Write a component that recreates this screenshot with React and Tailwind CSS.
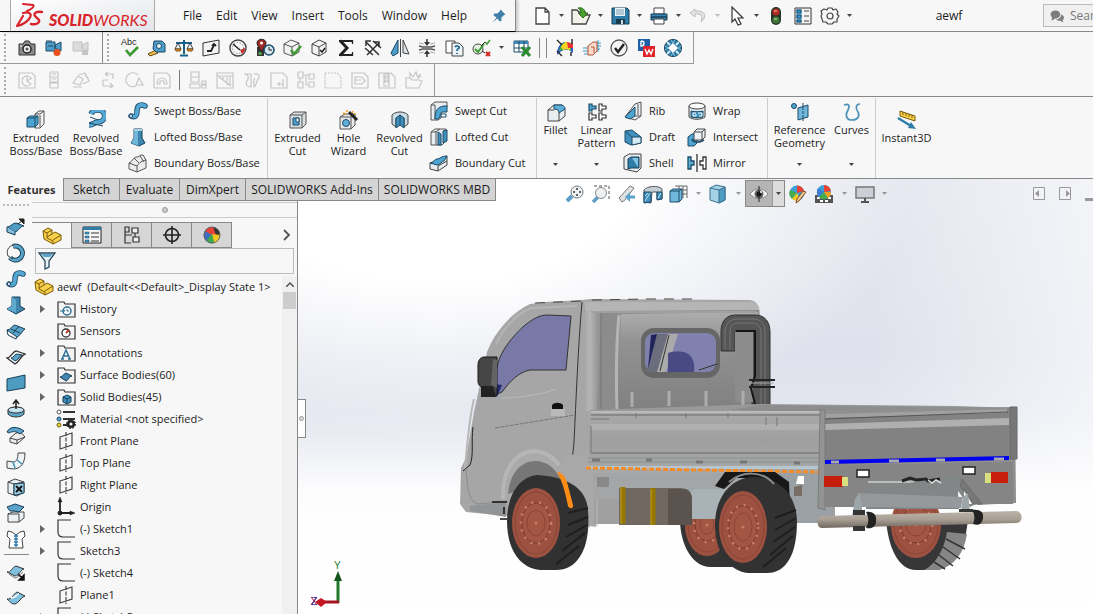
import React from 'react';

// Glyphs share a 20x20 grid
const glyphs = {
  camera: (
    <g>
      <path d="M2 6h4l2-3h4l2 3h4v11H2z" fill="#8b8b8b" stroke="#333" />
      <circle cx="10" cy="11" r="4" fill="#eee" stroke="#222" strokeWidth="1.500" />
      <circle cx="10" cy="11" r="1.500" fill="#555" />
      <path d="M3 8h2" stroke="#fff" />
    </g>
  ),
  record: (
    <g>
      <path d="M2 4h9v9H2zM11 7l6-3v9l-6-3z" fill="#4d9cc9" stroke="#1d4a66" />
      <path d="M2 3h6M4 8h5" stroke="#1d4a66" />
      <circle cx="13" cy="14.500" r="3.500" fill="#e8501e" />
    </g>
  ),
  recordOff: (
    <g>
      <path d="M2 4h9v9H2zM11 7l6-3v9l-6-3z" fill="#dcdcdc" stroke="#c2c2c2" />
      <path d="M11 12h6v5h-6z" fill="#c4c4c4" />
    </g>
  ),
  measure: (
    <g>
      <path d="M1 16l8-4 2 3-8 3z" fill="#f1c24b" stroke="#5a4410" />
      <path d="M7 3h8l3 3v8H9l-3-3z" fill="#4d9cc9" stroke="#1d4a66" />
      <circle cx="12" cy="8" r="2.500" fill="#e8f3f9" stroke="#1d4a66" />
    </g>
  ),
  scales: (
    <g>
      <path d="M10 2v14M6 17.500h8M2 5h16" stroke="#1d5f8a" strokeWidth="2" />
      <path d="M1 11l3-6 3 6zM13 11l3-6 3 6z" fill="none" stroke="#345" />
      <path d="M1 11h6l-1 2H2zM13 11h6l-1 2h-4z" fill="#f5a83a" stroke="#7a4d0c" />
    </g>
  ),
  section: (
    <g>
      <path d="M2 5l16-3v13L2 18z" fill="#f4f4f4" stroke="#333" />
      <path d="M6 13h4l3-6M11 8l2-2 2 2" fill="none" stroke="#222" strokeWidth="1.800" />
    </g>
  ),
  gauge: (
    <g>
      <circle cx="10" cy="10" r="8" fill="#f7f7f7" stroke="#444" strokeWidth="1.400" />
      <circle cx="10" cy="10" r="5.500" fill="none" stroke="#555" strokeDasharray="1 2" />
      <path d="M17 10a7 7 0 0 1-3 6l-2-4z" fill="#c2312a" />
      <path d="M5 6l7 6" stroke="#222" strokeWidth="1.500" />
    </g>
  ),
  pinClock: (
    <g>
      <path d="M2 9h7v9H2z" fill="#333" />
      <path d="M2 5c0-5 9-5 9 0 0 3-3 5-4.500 9C5 10 2 8 2 5z" fill="#9c2a22" stroke="#222" />
      <circle cx="6.500" cy="5" r="1.500" fill="#fff" />
      <circle cx="5" cy="15.500" r="1.800" fill="#4ba24a" />
      <circle cx="14" cy="12" r="5" fill="#d5e8f2" stroke="#1d4a66" strokeWidth="1.500" />
      <path d="M14 9v3h3" fill="none" stroke="#222" />
    </g>
  ),
  boxCheck: (
    <g>
      <path d="M2 6l7-4 8 3v9l-7 4-8-3z" fill="#f3f3f3" stroke="#555" />
      <path d="M2 6l8 3 7-4M10 9v9" fill="none" stroke="#555" />
      <path d="M9 12l3 4 7-8" fill="none" stroke="#3f9a35" strokeWidth="2.500" />
    </g>
  ),
  boxTick: (
    <g>
      <path d="M3 6l7-4 7 3v9l-7 4-7-3z" fill="#f3f3f3" stroke="#444" />
      <path d="M3 6l7 3 7-4M10 9v9" fill="none" stroke="#444" />
      <path d="M11 12l2 2 3-4" fill="none" stroke="#222" strokeWidth="1.500" />
    </g>
  ),
  sigma: (
    <g fill="none" stroke="#222">
      <path d="M4 2.500l7 7.500-7 7.500" strokeWidth="3" />
      <path d="M3 3h13M3 17h13" strokeWidth="2" />
      <path d="M16.500 2v4M16.500 18v-4" strokeWidth="1.300" />
    </g>
  ),
  deviate: (
    <g fill="none" stroke="#333" strokeWidth="1.500">
      <path d="M3 4l13 13M4 17L16 5M16 9V4h-5" />
      <path d="M10 3l8 7M2 10l8 7M8 3H3v5" />
    </g>
  ),
  draftCheck: (
    <g>
      <path d="M8 2L1 15l2 3 5-3z" fill="#4d9cc9" stroke="#1d4a66" />
      <path d="M13 2v13l6 1z" fill="#dde4e8" stroke="#444" />
      <path d="M10.500 1v18" stroke="#444" />
    </g>
  ),
  compress: (
    <g>
      <path d="M2 8l4 1h8l4-1M2 12l4-1h8l4 1" fill="none" stroke="#555" strokeWidth="1.500" />
      <path d="M2 5l5 1M18 5l-5 1M2 15l5-1M18 15l-5-1" stroke="#aaa" />
      <path d="M10 1v5M10 19v-5" stroke="#333" strokeWidth="1.500" />
      <path d="M7 4h6l-3 4zM7 16h6l-3-4z" fill="#333" />
    </g>
  ),
  docHelp: (
    <g>
      <path d="M2 3h9v12H2z" fill="#fff" stroke="#444" />
      <path d="M8 5h7l4 4v9H8z" fill="#eef3f7" stroke="#444" />
      <path d="M11 9c1-2 5-1 4 1-1 1-2 1-2 3M13 15v1" fill="none" stroke="#1e6a9a" strokeWidth="1.800" />
    </g>
  ),
  compare: (
    <g fill="none">
      <circle cx="7" cy="11" r="5" stroke="#444" fill="#e8f5e4" />
      <path d="M4 11l3 3 6-8" stroke="#3f9a35" strokeWidth="2" />
      <path d="M14 4l2 2 3-4" stroke="#3f9a35" strokeWidth="1.500" />
      <path d="M10 8l4-4M11 13l3 2" stroke="#222" />
      <path d="M15 14l4 4M19 14l-4 4" stroke="#d3261d" strokeWidth="2" />
    </g>
  ),
  tableX: (
    <g>
      <path d="M2 3h14v11H2z" fill="#fff" stroke="#1d4a66" />
      <path d="M2 3h14v3H2z" fill="#3b86b5" />
      <path d="M2 10h14M7 3v11M12 3v11" stroke="#1d4a66" />
      <path d="M10 9l8 9M18 9l-8 9" stroke="#2b8a2e" strokeWidth="3" />
    </g>
  ),
  simulate: (
    <g>
      <path d="M2 17C2 9 6 4 10 4l8 2v9c-3-3-5-4-8-3-3 0-5 2-8 5z" fill="#2d57c4" />
      <path d="M4 13C5 8 7 5 10 4l6 1v8c-3-2-5-2-7-1-2 0-4 1-5 1z" fill="#3fae49" />
      <path d="M6 9c1-3 3-4 5-5l4 1v7c-3-1-5-1-7 0z" fill="#f5d327" />
      <path d="M12 4l6 2v4l-5 0z" fill="#e33" />
      <path d="M2 2l5 5M17 1v5M2 13l5 5M16 14v4" stroke="#222" strokeWidth="1.400" />
    </g>
  ),
  flow: (
    <g fill="none">
      <path d="M1 10h6M1 13h6M2 16h5M13 5h6M14 8h5M14 11h4M16 2v12" stroke="#3d9ac8" />
      <path d="M6 8l5-4h4v9l-4 4H6z" fill="#fbd9cb" stroke="#b0543a" />
      <path d="M9 9h3v6" stroke="#b0543a" />
    </g>
  ),
  circleCheck: (
    <g fill="none">
      <circle cx="10" cy="10" r="8" fill="#f4f4f4" stroke="#555" strokeWidth="1.300" />
      <path d="M6 10l3 4 6-8" stroke="#222" strokeWidth="2.500" />
    </g>
  ),
  dw: (
    <g>
      <path d="M2 1h12v12H2z" fill="#1f5fa8" />
      <path d="M7 8h12v11H7z" fill="#e0242b" />
      <path d="M5 3v5c4 0 4-5 0-5" fill="none" stroke="#fff" strokeWidth="1.400" />
      <path d="M9 11l2 5 2-4 2 4 2-5" fill="none" stroke="#fff" strokeWidth="1.400" />
    </g>
  ),
  ring: (
    <g>
      <circle cx="10" cy="10" r="8.500" fill="#2c7ca8" stroke="#123c55" />
      <path d="M10 5l5 5-5 5-5-5z" fill="#fff" />
      <path d="M4 4l3 3M16 4l-3 3M4 16l3-3M16 16l-3-3" stroke="#d3e9f4" strokeWidth="2" />
      <path d="M8 2l2 3 2-3M8 18l2-3 2 3M2 8l3 2-3 2M18 8l-3 2 3 2" fill="none" stroke="#8cc0dc" />
    </g>
  ),
  spell: <path d="M6 12l4 5 8-8" fill="none" stroke="#3f9a35" strokeWidth="2.800" />,

  // Disabled second bar
  offA: <path d="M2 3h13l3 3v12H2zM14 8a5 5 0 1 0 0 6l-4-3V6M10 11l5-3" />,
  offB: <path d="M6 2h8v5H6zM6 7h8v5H6zM6 13h8v5H6zM8 9h4M8 4h4" />,
  offC: <path d="M2 13l5-7 5 3-3 6zM8 5l6-2 4 8-6 3M14 5l3 3M2 17h9" />,
  offD: <path d="M7 4h9M7 4l3-2M7 4l3 2M15 4v5M5 10v6h10M12 13l3 3-3 2M5 10h5" />,
  offE: <path d="M13 5a7 7 0 1 0-2 11M11 15l3-7 4 7z" />,
  offF: <path d="M2 3h13l3 3v12H2zM5 14c0-8 10-8 10 0M5 14h3v-3h4v3h3" />,
  offG: <path d="M3 2h8v5H3zM3 7h8v5H3zM2 14h10v4H2zM14 11h4v3h-4zM14 15h4v3h-4z" />,
  offH: <path d="M2 3h16v15H2zM2 6h16M4 7l12 9M8 7v4M12 7v8M15 7v9" />,
  offI: <path d="M2 4c5 0 5 4 3 7s0 6 4 6V4zM12 4c6-1 6 3 4 5s-1 8-5 8M13 8c-2 3-2 6 0 9" />,
  offJ: <path d="M2 3h12l4 4v11H2zM8 14h6v-5M14 14v3M10 12v4" />,
  offK: <path d="M2 2h5v6H2zM2 12h5v6H2zM13 4h5v5h-5zM13 12h5v5h-5zM7 5h6M4 8v4M10 5v10h3" />,
  offL: <path d="M2 3h12l4 4v11H2z" strokeDasharray="2 1" />,
  offM: <path d="M2 3h12l4 4v11H2zM5 7h7l3 4-3 3H5zM5 10h6" />,
  offN: <path d="M2 3h12l4 4v11H2zM7 4h5v12H7zM8 6h3v2H8zM8 10h3v2H8z" />,
  offO: <path d="M2 8h4l2 2h7l3 1-3 7H2zM6 8V3l3 4 3-5 2 6 2-4v4" />,

  newDoc: <path d="M4 2h9l4 4v12H4zM13 2v4h4" fill="#fff" stroke="#444" strokeWidth="1.300" />,
  open: (
    <g>
      <path d="M1 18V4h5l2 2h6v3h5l-4 9z" fill="#f2f2ea" stroke="#444" strokeWidth="1.300" />
      <path d="M7 2c5-1 7 2 7 5h3l-5 5-5-5h3c0-2-1-4-3-5z" fill="#4aa32d" stroke="#2c6b1c" />
    </g>
  ),
  save: (
    <g>
      <path d="M2 2h15l2 2v14H2z" fill="#2f7ca9" stroke="#173f57" />
      <path d="M5 2h10v8H5z" fill="#eef5f9" />
      <path d="M6 4h8M6 6h8M6 8h8" stroke="#7a9db0" />
      <path d="M6 13h9v5H6z" fill="#1b3b4d" />
      <path d="M11 14h2v4h-2z" fill="#cfdde4" />
    </g>
  ),
  print: (
    <g>
      <path d="M5 2h10v6H5z" fill="#fff" stroke="#444" />
      <path d="M2 8h16v6H2z" fill="#3b86b5" stroke="#173f57" />
      <path d="M5 13h10v5H5z" fill="#fff" stroke="#444" />
      <path d="M2 11h16" stroke="#173f57" strokeWidth="1.500" />
    </g>
  ),
  undo: <path d="M7 3L2 7l5 4V8c6-1 8 2 6 8 6-5 5-12-6-11z" fill="#e3e3e3" stroke="#bdbdbd" />,
  cursor: <path d="M5 1v15l3-3 3 6 3-1-3-6h5z" fill="#fff" stroke="#333" strokeWidth="1.200" />,
  traffic: (
    <g>
      <rect x="5" y="1" width="10" height="18" rx="5" fill="#26332a" />
      <circle cx="10" cy="6" r="3.600" fill="#b22a20" />
      <circle cx="10" cy="14" r="3.600" fill="#3a7a35" />
      <path d="M8 5h3M8 13h3" stroke="#e9c9c0" />
    </g>
  ),
  list: (
    <g>
      <path d="M2 2h16v16H2z" fill="#f5f5f5" stroke="#333" />
      <path d="M3 3h6v14H3z" fill="#8cc4e2" />
      <path d="M4 4h4v3H4zM4 9h4v3H4zM4 14h4v2H4z" fill="#3b9ad0" stroke="#174a66" />
      <path d="M11 5h5M11 10h5M11 15h5" stroke="#444" />
    </g>
  ),
  gear: (
    <g fill="none" stroke="#444" strokeWidth="1.200">
      <path d="M8 2h4l1 2 3-1 2 3-1 2 2 2-2 3 0 3-3 0-2 2h-4l-2-2-3 0-1-3-1-3 1-2-1-3 3-2 3 1z" strokeLinejoin="round" />
      <circle cx="10" cy="10" r="3" />
    </g>
  ),
  chat: (
    <g fill="#7d7d7d">
      <ellipse cx="8" cy="8" rx="6" ry="5" />
      <path d="M4 11l-1 5 5-3z" />
      <path d="M15 8c4 1 5 5 2 7l1 3-4-2c-3 0-5-1-5-2 4 0 6-2 6-6z" />
    </g>
  ),
  pin: <path d="M12 2l6 6-2 1-3 3 0 4-2 1-3-4-6 5 5-6-4-3 1-2h4l3-3z" fill="#3f7fa8" />,

  // Ribbon
  extrude: (
    <g>
      <path d="M9 4l4-3h5v13l-4 4H9z" fill="#f1f1f1" stroke="#555" />
      <path d="M14 5v12M9 4h5l4-3" fill="none" stroke="#555" />
      <path d="M1 8l3-2h8v8l-3 3H1z" fill="#4fa5d1" stroke="#1d4a66" />
      <path d="M1 8h8v9M9 8l3-2" fill="none" stroke="#1d4a66" />
    </g>
  ),
  revolve: (
    <g fill="none">
      <path d="M5 4a7 6 0 1 1 7 8c-4 0-4 3-9 3" stroke="#1d4a66" strokeWidth="5.500" />
      <path d="M5 4a7 6 0 1 1 7 8c-4 0-4 3-9 3" stroke="#55a8d3" strokeWidth="4" />
      <path d="M3 13l14 3M4 7l8 3" stroke="#1d4a66" />
    </g>
  ),
  sweep: (
    <g fill="none" strokeLinecap="round">
      <path d="M3 15c5 2 6-1 6-5s2-8 8-5" stroke="#1d4a66" strokeWidth="5.500" />
      <path d="M3 15c5 2 6-1 6-5s2-8 8-5" stroke="#55a8d3" strokeWidth="3.800" />
      <ellipse cx="3" cy="15" rx="1.500" ry="2" fill="#e5f3fa" stroke="#1d4a66" />
    </g>
  ),
  loft: (
    <g>
      <path d="M6 2h8v9l3 5-6 3-8-3 3-5z" fill="#3f85ad" stroke="#173f57" />
      <path d="M6 2h8v2H6z" fill="#a8d3e8" />
      <path d="M10 4v14l1 1-8-3 3-5V4z" fill="#6fb5d8" />
    </g>
  ),
  boundary: (
    <g>
      <path d="M1 10c3-1 4-5 7-6 3 1 4-3 7-2l3 5v8l-9 4-8-3z" fill="#ececec" stroke="#555" />
      <path d="M1 10l8 3c2-2 3-5 9-6M9 13v6M6 5l5 5M12 3l4 6" fill="none" stroke="#555" />
    </g>
  ),
  extrudeCut: (
    <g>
      <path d="M2 5l4-3h12v12l-4 4H2z" fill="#d8dde0" stroke="#555" />
      <path d="M2 5h12v13M14 5l4-3" fill="none" stroke="#555" />
      <path d="M5 8h6v7H5z" fill="#4fa5d1" stroke="#1d4a66" />
      <path d="M8 8h3v4H8z" fill="#fff" stroke="#1d4a66" />
    </g>
  ),
  hole: (
    <g>
      <path d="M1 7l5-3h10v11l-4 4H1z" fill="#e9e9e9" stroke="#555" />
      <path d="M1 7h11v12M12 7l4-3" fill="none" stroke="#555" />
      <circle cx="7" cy="13" r="3.500" fill="#5fb0d8" stroke="#1d4a66" />
      <path d="M10 2l8 8" stroke="#222" strokeWidth="3" />
      <path d="M4 3l3 1M8 0v2M14 1l-1 2M17 4l-2 0" stroke="#f0a020" strokeWidth="1.500" />
    </g>
  ),
  revolveCut: (
    <g>
      <path d="M2 5c3-4 13-4 16 0v9l-4 3V8l-4 2-4-2v9l-4-3z" fill="#c9dbe5" stroke="#444" />
      <path d="M6 8l4-3 4 3v10l-4-3-4 3z" fill="#3f90bd" stroke="#1d4a66" />
      <path d="M10 5v10" stroke="#1d4a66" />
    </g>
  ),
  sweepCut: (
    <g>
      <path d="M2 4l4-3h12v5c-5 0-6 3-6 11l-3 2H2z" fill="#e7edf0" stroke="#555" />
      <path d="M2 4h4v14" fill="none" stroke="#555" />
      <path d="M6 18C6 10 8 6 15 5h3v6h-3c-3 0-4 1-4 5l-2 2z" fill="#4fa5d1" stroke="#1d4a66" />
      <path d="M12 13h5v3h-5z" fill="#fff" stroke="#1d4a66" />
    </g>
  ),
  loftCut: (
    <g>
      <path d="M2 5l4-3h11v12l-4 4H2z" fill="#e7edf0" stroke="#555" />
      <path d="M7 4v14M2 5h5l4-3" fill="none" stroke="#555" />
      <path d="M9 5l3 2v11h-3zM14 4l4-1v11l-4 2z" fill="#3f90bd" stroke="#1d4a66" />
    </g>
  ),
  boundaryCut: (
    <g>
      <path d="M1 10l8-3 9-4v9l-9 6-8-2z" fill="#e7edf0" stroke="#444" />
      <path d="M1 10c4 0 4-4 7-4s4-3 10-3l-3 5c-2 0-4 4-7 4z" fill="#4fa5d1" stroke="#1d4a66" />
      <path d="M9 13l9-5M9 13v5" stroke="#444" />
    </g>
  ),
  fillet: (
    <g>
      <path d="M2 8l6-5h8l3 4v7l-6 5H2z" fill="#e9eef1" stroke="#444" />
      <path d="M8 3h8c2 1 3 2 3 4l-6 4c0-3-2-4-5-4z" fill="#5fb0d8" stroke="#1d4a66" />
      <path d="M13 11v8M2 8h6" stroke="#444" />
    </g>
  ),
  pattern: (
    <g stroke="#333" strokeWidth="1.200" fill="#fff">
      <path d="M2 2h3v2h4v3H5v2H2z" fill="#4fa5d1" stroke="#1d4a66" />
      <path d="M12 2h3v2h4v3h-4v2h-3zM2 11h3v2h4v3H5v2H2zM12 11h3v2h4v3h-4v2h-3z" />
    </g>
  ),
  rib: (
    <g>
      <path d="M2 16L12 3l6-2v14l-6 4z" fill="#eceff1" stroke="#555" />
      <path d="M2 16L12 6v9l-5 3z" fill="#4fa5d1" stroke="#1d4a66" />
      <path d="M12 15l6 0M15 3v11" stroke="#555" />
    </g>
  ),
  draft: (
    <g>
      <path d="M2 4l7-1 9 7v6l-10 2-6-3z" fill="#3f90bd" stroke="#1d4a66" />
      <path d="M9 10h9v6l-9 2z" fill="#d7e9f2" stroke="#1d4a66" />
      <path d="M2 4l7 6" stroke="#1d4a66" />
    </g>
  ),
  shell: (
    <g>
      <path d="M1 4l5-3h12v14l-4 4-13-3z" fill="#e9eef1" stroke="#444" />
      <path d="M5 6l3-2h8v11H8l-3 1z" fill="#2f7ca9" stroke="#173f57" />
      <path d="M9 5h6v9z" fill="#83c4e4" />
    </g>
  ),
  wrap: (
    <g>
      <path d="M2 5v11c3 3 13 3 16 0V5" fill="#e4ebef" stroke="#444" />
      <ellipse cx="10" cy="5" rx="8" ry="3" fill="#fff" stroke="#444" />
      <path d="M4 10c4 1 8 1 12 0v6c-4 1-8 1-12 0z" fill="#3f90bd" stroke="#1d4a66" />
      <path d="M9 12H6v3h3v-2M11 12h4v3h-3" fill="none" stroke="#fff" />
    </g>
  ),
  intersect: (
    <g>
      <path d="M1 10l4-3h5v9l-3 3H1z" fill="#4fa5d1" stroke="#1d4a66" />
      <path d="M7 5l3-3h8v8l-3 3H7z" fill="#f0f3f5" stroke="#444" />
      <path d="M7 5h8v8M15 5l3-3" fill="none" stroke="#444" />
      <path d="M5 12c1 4 7 4 12 1" fill="none" stroke="#1d4a66" strokeWidth="1.500" />
    </g>
  ),
  mirror: (
    <g strokeWidth="1.300">
      <path d="M1 4h3v4h3v4H4v4H1z" fill="#5fb0d8" stroke="#1d4a66" />
      <path d="M10 1v18" stroke="#333" />
      <path d="M19 4h-3v4h-3v4h3v4h3z" fill="#fff" stroke="#333" />
    </g>
  ),
  refGeom: (
    <g>
      <circle cx="4" cy="4" r="2.500" fill="#4fa5d1" stroke="#1d4a66" />
      <path d="M8 6l10-3v12L8 18z" fill="#6fb8dc" stroke="#1d4a66" />
      <path d="M13 1v18" stroke="#1d4a66" strokeDasharray="3 1" />
    </g>
  ),
  curves: <path d="M2 3c5-2 6 1 4 5-3 5-2 10 4 10s8-4 6-8c-3-4-2-8 2-8" fill="none" stroke="#4d93b8" strokeWidth="1.700" />,
  instant: (
    <g>
      <path d="M3 1l15 5v5L3 6z" fill="#f7d248" stroke="#7a5c10" />
      <path d="M6 2v3M9 3v3M12 4v3M15 5v3" stroke="#7a5c10" />
      <path d="M1 8l13 8" stroke="#2f7ca9" strokeWidth="2.500" />
      <path d="M14 12l5 7-8-1z" fill="#2f7ca9" />
    </g>
  ),

  // Heads-up view bar
  zoomFit: (
    <g>
      <path d="M2 17l5-5" stroke="#5d9fc4" strokeWidth="4" />
      <circle cx="12" cy="8" r="6" fill="#eef1f4" stroke="#777" />
      <path d="M12 4v2M12 10v2M8 8h2M14 8h2" stroke="#333" strokeWidth="1.500" />
    </g>
  ),
  zoomArea: (
    <g>
      <path d="M3 2h15v13" fill="none" stroke="#555" strokeDasharray="3 2" />
      <path d="M2 18l5-5" stroke="#5d9fc4" strokeWidth="3.500" />
      <circle cx="10" cy="9" r="5.500" fill="#eef1f4" stroke="#888" />
    </g>
  ),
  prevView: (
    <g>
      <path d="M2 14L13 2l4 2-9 12-3 2z" fill="#dfe3e6" stroke="#777" />
      <path d="M18 13h-6" stroke="#5ba3c9" strokeWidth="3" />
      <path d="M13 8v10l-5-5z" fill="#5ba3c9" />
    </g>
  ),
  sectionView: (
    <g>
      <path d="M1 6c3-4 14-5 18-1v10h-5V8H9l-1 11-7-1z" fill="#c5d0d6" stroke="#555" />
      <path d="M1 8h7v10l-7 1zM14 8h5v7l-5 1z" fill="#3f90bd" stroke="#1d4a66" />
      <path d="M2 17l5-8M2 12l3-3M15 14l3-5" stroke="#bfe0ef" />
    </g>
  ),
  orient: (
    <g>
      <path d="M6 2h12v12M10 2v12M14 2v12M6 6h12M10 10h8" fill="none" stroke="#666" />
      <path d="M1 7l3-2h9v10l-3 3H1z" fill="#6fb8dc" stroke="#1d4a66" />
      <path d="M1 7h9v11M10 7l3-2" fill="none" stroke="#1d4a66" />
    </g>
  ),
  display: (
    <g>
      <path d="M2 4l6-3 9 2v13l-6 3-9-3z" fill="#a5d2e6" stroke="#3a718f" />
      <path d="M11 6l6-3v13l-6 3z" fill="#4f9cc3" stroke="#3a718f" />
      <path d="M2 4l9 2" stroke="#3a718f" />
    </g>
  ),
  eye: (
    <g>
      <path d="M1 10c5-7 13-7 18 0-5 6-13 6-18 0z" fill="#f5f5f5" stroke="#888" />
      <circle cx="10" cy="10" r="4.500" fill="#666" />
      <circle cx="10" cy="10" r="2.500" fill="#111" />
      <path d="M10 2v16" stroke="#222" />
      <circle cx="12" cy="8" r="1" fill="#fff" />
    </g>
  ),
  ball: (
    <g>
      <circle cx="10" cy="10" r="8" fill="#2f83c6" />
      <path d="M10 10L3 6a8 8 0 0 0 1 10z" fill="#3c6fc0" />
      <path d="M10 10L3 6a8 8 0 0 1 8-4l6 8z" fill="#e94235" />
      <path d="M11 2a8 8 0 0 1 7 8l-4 0z" fill="#333" />
      <path d="M10 9l8 1a8 8 0 0 1-6 8z" fill="#f4c81f" />
      <path d="M10 9l2 9a8 8 0 0 1-8-2z" fill="#3faa4a" />
      <circle cx="10" cy="10" r="8" fill="none" stroke="#666" />
    </g>
  ),
  editLook: (
    <g>
      <circle cx="9" cy="9" r="7.500" fill="#3c9fd8" />
      <path d="M9 9V1.500A7.500 7.500 0 0 1 16 7z" fill="#e94235" />
      <path d="M9 9L2 6a8 8 0 0 0 2 9z" fill="#44ac4d" />
      <path d="M9 9l-5 6a8 8 0 0 0 8 1z" fill="#f4c81f" />
      <path d="M18 8l-7 9-3 2 1-4 6-8z" fill="#f2c78a" stroke="#7a4d2c" />
    </g>
  ),
  scene: (
    <g>
      <path d="M1 11h18v8H1z" fill="#555" />
      <path d="M3 13h3v2H3zM14 13h3v2h-3zM6 16h3v2H6zM11 16h3v2h-3z" fill="#fff" />
      <circle cx="10" cy="8" r="7" fill="#3c9fd8" />
      <path d="M10 8V1a7 7 0 0 1 7 6z" fill="#e94235" />
      <path d="M10 8L4 4a7 7 0 0 0 1 9z" fill="#3c7fd8" />
      <path d="M10 8l-5 5a7 7 0 0 0 9 1z" fill="#44ac4d" />
      <path d="M10 8l7 0a7 7 0 0 1-3 6z" fill="#f4a01f" />
    </g>
  ),
  monitor: (
    <g>
      <path d="M1 3h18v11H1z" fill="#cbd0d6" stroke="#777" strokeWidth="1.500" />
      <path d="M10 14v4M6 18h8" stroke="#555" strokeWidth="2" />
    </g>
  ),
  paneLeft: (
    <g>
      <path d="M4.500 3.500h11v12h-11z" fill="#f2f3f6" stroke="#999" />
      <path d="M10 6v7l-4-3.500z" fill="#999" />
    </g>
  ),
  paneRight: (
    <g>
      <path d="M4.500 3.500h11v12h-11z" fill="#f2f3f6" stroke="#999" />
      <path d="M11 6v7l4-3.500z" fill="#999" />
    </g>
  ),

  // Surface strip
  surfExtrude: (
    <g>
      <path d="M1 10c4 0 5-4 9-4l8 3c-4 0-5 5-9 6z" fill="#4f9cc3" stroke="#173f57" />
      <path d="M1 10v5l8 3v-3" fill="#83bfdc" stroke="#173f57" />
      <path d="M12 7l5-4M13 2h5v5z" stroke="#222" fill="#222" />
    </g>
  ),
  surfRevolve: (
    <g fill="none">
      <path d="M7 3.500a7 7 0 1 1-3 11" stroke="#173f57" strokeWidth="5" />
      <path d="M7 3.500a7 7 0 1 1-3 11" stroke="#5ba3c9" strokeWidth="3" />
      <path d="M8 2C2 3 0 8 2 13l5 3" stroke="#444" />
    </g>
  ),
  surfLoft: (
    <g>
      <path d="M6 2h8v9l5 3-9 5-9-5 5-3z" fill="#3f85ad" stroke="#173f57" />
      <path d="M6 2l4 3v13L1 14l5-3z" fill="#5fa9cf" />
    </g>
  ),
  surfBoundary: (
    <g>
      <path d="M1 9c4 0 4-4 8-5l10 4c-3 2-4 6-8 8z" fill="#5ba3c9" stroke="#173f57" />
      <path d="M1 9l1 5 8 4 1-2M5 8l9 4M13 6c-3 1-4 5-6 6" fill="none" stroke="#173f57" />
    </g>
  ),
  surfFill: (
    <g>
      <path d="M1 11c4 0 5-6 9-7l9 3c-4 1-5 8-10 10z" fill="#fff" stroke="#333" strokeWidth="1.300" />
      <path d="M5 11c3 0 3-4 6-4l5 1c-3 1-3 5-7 6z" fill="#5ba3c9" stroke="#173f57" />
    </g>
  ),
  planar: <path d="M1 6l18-4v13L1 18z" fill="#4f9cc3" stroke="#173f57" />,
  offset: (
    <g>
      <path d="M2 11c3-4 13-4 16 0v4c-3 4-13 4-16 0z" fill="#5ba3c9" stroke="#333" />
      <ellipse cx="10" cy="11" rx="8" ry="3" fill="#c4e2f0" stroke="#333" />
      <path d="M10 10V2M7 5l3-4 3 4" fill="none" stroke="#222" strokeWidth="1.500" />
    </g>
  ),
  ruled: (
    <g>
      <path d="M4 13l6-5c7-1 6 1 9 4l-8 7-7-2z" fill="#eee" stroke="#444" />
      <path d="M11 15l8-3M4 13l7 2v4" fill="none" stroke="#444" />
      <path d="M1 7c3-6 10-6 17-1l-4 3c-4-3-7-3-11-1z" fill="#5ba3c9" stroke="#173f57" />
    </g>
  ),
  flatten: (
    <g>
      <path d="M1 10l6 1c4 0 5-4 5-9l7 0c0 10-4 16-12 16l-6-1z" fill="#eef4f7" stroke="#444" />
      <path d="M7 11l2 6M11 9l5 4" stroke="#3f90bd" strokeWidth="1.500" />
    </g>
  ),
  deleteFace: (
    <g>
      <path d="M2 5l7-3 9 3v10l-7 4-9-3z" fill="#e9eef1" stroke="#444" />
      <path d="M2 5l6 2 10-2M8 7v11" fill="none" stroke="#444" />
      <path d="M8 7l10-1v10l-8 2-2 0z" fill="#9ccbe2" stroke="#173f57" />
      <path d="M10 9l6 6M16 9l-6 6" stroke="#111" strokeWidth="1.800" />
    </g>
  ),
  replaceFace: (
    <g>
      <path d="M2 11l5-2h11v6l-5 4H2z" fill="#eef1f3" stroke="#444" />
      <path d="M2 11h11v8" fill="none" stroke="#444" />
      <path d="M1 4l8-3 9 3-5 5-5-1-4 0z" fill="#5ba3c9" stroke="#173f57" />
    </g>
  ),
  zip: (
    <g>
      <path d="M2 2l4 1 4 3 4-3 4-1 1 5-3 3 1 9H3l1-9-3-3z" fill="#fff" stroke="#444" />
      <path d="M10 5v13M8 7h4M8 10h4M8 13h4M8 16h4" stroke="#2f7ca9" strokeWidth="1.300" />
    </g>
  ),
  extend: (
    <g>
      <path d="M1 10c4 1 5-5 9-6l8 3c-4 1-5 7-9 7z" fill="#7fc0dd" stroke="#333" />
      <path d="M3 12l6 4c3 0 5-4 8-6" fill="none" stroke="#777" />
      <path d="M12 12l5 5M18 13v5h-5z" fill="#111" stroke="#111" strokeWidth="1.500" />
    </g>
  ),
  wave: (
    <g>
      <path d="M1 11c5 1 6-5 10-7l8 4c-4 1-6 7-10 8-3 0-4-1-8-5z" fill="#7fc0dd" stroke="#333" />
      <path d="M5 10c4 0 5-3 8-4" stroke="#fff" fill="none" strokeWidth="1.500" />
    </g>
  ),

  // Feature tree
  part: (
    <g stroke="#7a5a0a" strokeLinejoin="round">
      <path d="M1 5l5-3 4 2v4l3-2 6 3v5l-8 4-9-5z" fill="#f8d14a" />
      <path d="M1 5l4 2 5-3M5 7v5l6 3v3M5 11l5-3M11 14l8-5" fill="none" />
    </g>
  ),
  sheet: (
    <g>
      <path d="M1 2h18v16H1z" fill="#f5f5f5" stroke="#222" />
      <path d="M1 2h18v3H1z" fill="#2f7ca9" />
      <path d="M3 7h4v2H3zM3 11h4v2H3zM3 15h4v2H3z" fill="#3b9ad0" stroke="#174a66" strokeWidth=".5" />
      <path d="M9 8h8M9 12h8M9 16h8" stroke="#333" />
    </g>
  ),
  config: (
    <g fill="none" stroke="#333" strokeWidth="1.200">
      <path d="M3 2h4v5H3zM3 2v16h6M3 10h7" />
      <path d="M10 3h6v5h-6zM11 12h6v5h-6z" fill="#eee" />
      <path d="M13 8v4" />
    </g>
  ),
  target: (
    <g fill="none" stroke="#222" strokeWidth="1.600">
      <circle cx="10" cy="10" r="6.500" />
      <path d="M10 1v18M1 10h18" />
    </g>
  ),
  funnel: (
    <g>
      <path d="M2 2h16l-6 8v6l-4 2v-8z" fill="#e9f1f6" stroke="#2a4b5e" strokeWidth="1.300" />
      <path d="M4 3h12l-3 3H7z" fill="#5ba3c9" />
    </g>
  ),
  material: (
    <g>
      <path d="M7 3h12M7 10h12M7 16h6" stroke="#333" strokeWidth="1.800" />
      <circle cx="3" cy="3" r="2" fill="#fff" stroke="#555" />
      <circle cx="3" cy="10" r="2" fill="#4fa5d1" stroke="#1d4a66" />
      <circle cx="3" cy="16" r="2" fill="#f0d83a" stroke="#6a5c10" />
      <circle cx="15" cy="15" r="2.800" fill="none" stroke="#222" strokeWidth="2.500" />
      <circle cx="15" cy="15" r="4.500" fill="none" stroke="#222" strokeDasharray="2 1.500" />
    </g>
  ),
  plane: (
    <g fill="none" stroke="#444" strokeWidth="1.200">
      <path d="M4 6l12-4v12L4 18z" />
      <path d="M10 1v18" strokeDasharray="4 1.500" />
    </g>
  ),
  origin: (
    <g stroke="#222" fill="#222">
      <path d="M4 3v13h13" fill="none" strokeWidth="1.800" />
      <path d="M4 0l2 5H2zM19 16l-5-2v4z" strokeWidth=".5" />
      <circle cx="4" cy="16" r="2" />
    </g>
  ),
  sketch: <path d="M15 1H2v12c0 4 2 5 5 5h12" fill="none" stroke="#333" strokeWidth="1.200" />,
};

const folder = <path d="M2 18V3h6l1 2h10v13z" fill="#f3f3f3" stroke="#333" strokeWidth="1.200" />;
glyphs.folderHistory = (
  <g>
    {folder}
    <circle cx="11" cy="12" r="4" fill="#fff" stroke="#2f6f94" strokeWidth="1.500" />
    <path d="M11 10v2h2M4 12h5l-2-2" fill="none" stroke="#2f6f94" />
  </g>
);
glyphs.folderSensor = (
  <g>
    {folder}
    <circle cx="10" cy="12" r="4" fill="#fff" stroke="#333" strokeWidth="1.300" />
    <path d="M10 12l3-3" stroke="#c2312a" strokeWidth="2" />
  </g>
);
glyphs.folderNote = (
  <g>
    {folder}
    <path d="M6 16l4-9 4 9M7.500 13h5M5 16h3M12 16h3" fill="none" stroke="#2f6f94" strokeWidth="1.500" />
  </g>
);
glyphs.folderSurface = (
  <g>
    {folder}
    <path d="M4 12c3 0 3-3 6-4l6 3c-3 0-3 4-6 5z" fill="#3f85ad" stroke="#173f57" />
  </g>
);
glyphs.folderSolid = (
  <g>
    {folder}
    <path d="M7 10l4-2 4 2v5l-4 2-4-2z" fill="#3f90bd" stroke="#173f57" />
    <path d="M7 10l4 2 4-2M11 12v5" fill="none" stroke="#173f57" />
  </g>
);

const Icon = ({ name, className = 'w-5 h-5' }) => {
  const off = name.length === 4 && name.startsWith('off');
  return (
    <svg viewBox="0 0 20 20" className={`${className} shrink-0`} aria-hidden="true">
      {off ? <g fill="none" stroke="#c6c6c6" strokeWidth="1.200">{glyphs[name]}</g> : glyphs[name]}
    </svg>
  );
};

const Caret = ({ className = 'text-[#444]' }) => (
  <svg viewBox="0 0 5 3" className={`w-[5px] h-[3px] shrink-0 ${className}`} aria-hidden="true">
    <path d="M0 0h5L2.500 3z" fill="currentColor" />
  </svg>
);

const IconButton = ({ name, label }) => (
  <button type="button" aria-label={label || name} className="flex w-[27px] h-full shrink-0 items-center justify-center">
    <Icon name={name} />
  </button>
);

const CaretButton = ({ label, className = 'w-3', tone }) => (
  <button type="button" aria-label={label} className={`flex h-full shrink-0 items-center justify-center ${className}`}>
    <Caret className={tone} />
  </button>
);

const Grip = () => <div className="w-0 h-[27px] border-l-2 border-dotted border-[#aaa] shrink-0" />;

const menus = ['File', 'Edit', 'View', 'Insert', 'Tools', 'Window', 'Help'];

const Logo = () => (
  <div className="flex items-center h-full w-[145px] shrink-0 border-x border-[#aaa] bg-linear-to-br from-white to-[#e2e4e8] pl-1">
    <svg viewBox="0 0 30 28" className="w-[30px] h-7 shrink-0" aria-hidden="true">
      <g fill="none" stroke="#d8232a" strokeLinecap="round" strokeLinejoin="round">
        <path d="M8 2l10 1c2 1-1 4-6 6" strokeWidth="2" />
        <path d="M8 11c6-2 10 1 6 6-3 4-8 6-12 7L8 14" strokeWidth="2.200" />
        <path d="M27 10c-5-1-9 1-7 4l4 4c1 3-3 5-8 4" strokeWidth="2.400" />
      </g>
    </svg>
    <span className="pl-1 pt-2 font-[Lato] text-[16px] leading-5 italic text-[#d8232a]">
      <b className="font-black">SOLID</b>
      <span className="font-normal">WORKS</span>
    </span>
  </div>
);

const TitleBar = () => (
  <header className="flex h-8 shrink-0 border-b border-[#888]">
    <div className="flex h-8 shrink-0 border-b border-black border-r border-r-[#888] pl-[10px] shadow-[2px_0_3px_#0003]">
      <Logo />
      <nav className="flex items-center pl-7 pr-2">
        {menus.map((m) => (
          <button key={m} type="button" className="mr-[14px] h-full">{m}</button>
        ))}
        <button type="button" aria-label="Pin menu" className="ml-[10px] h-full">
          <Icon name="pin" className="w-4 h-4" />
        </button>
      </nav>
    </div>
    <div className="flex shrink-0 pl-3">
      {['newDoc', 'open', 'save', 'print', 'undo', 'cursor'].map((n) => (
        <div key={n} className="flex">
          <IconButton name={n} />
          <CaretButton label={`${n} options`} tone={n === 'undo' ? 'text-[#bbb]' : undefined} />
        </div>
      ))}
      <IconButton name="traffic" />
      <IconButton name="list" />
      <IconButton name="gear" />
      <CaretButton label="gear options" />
    </div>
    <div className="flex flex-1 items-center justify-center">aewf</div>
    <label className="my-1 flex w-[50px] shrink-0 items-center overflow-hidden border border-r-0 border-[#bbb] bg-[#f0f0f0] pl-[5px]">
      <Icon name="chat" className="w-4 h-4" />
      <input type="text" aria-label="Search commands" placeholder="Search" className="ml-[5px] w-16 shrink-0 bg-transparent outline-none placeholder:text-[#777]" />
    </label>
  </header>
);

const toolsA = ['measure', 'scales', 'section', 'gauge', 'pinClock', 'boxCheck', 'boxTick', 'sigma', 'deviate', 'draftCheck', 'compress', 'docHelp', 'compare'];
const offA = ['offA', 'offB', 'offC', 'offD', 'offE', 'offF'];
const offB = ['offG', 'offH', 'offI', 'offJ', 'offK', 'offL', 'offM', 'offN', 'offO'];

const Toolbars = () => (
  <div className="shrink-0 border-b border-[#888]">
    <div className="flex h-8 w-max items-center border-b border-r border-[#999] pl-1 pr-[7px]">
      <Grip />
      <div className="w-[7px]" />
      <IconButton name="camera" />
      <IconButton name="record" />
      <IconButton name="recordOff" />
      <div className="ml-2 h-full border-l border-[#888]" />
      <div className="w-1" />
      <Grip />
      <div className="w-[7px]" />
      <button type="button" aria-label="Spelling" className="relative flex h-full w-[27px] items-center justify-center">
        <Icon name="spell" />
        <span className="absolute top-1 left-[5px] font-['Liberation_Sans'] text-[9px] leading-3">Abc</span>
      </button>
      {toolsA.map((n) => <IconButton key={n} name={n} />)}
      <CaretButton label="compare options" className="w-[14px]" />
      <IconButton name="tableX" />
      <div className="ml-1 h-5 border-l border-[#888]" />
      <div className="ml-[6px] mr-1 h-5 border-l border-[#888]" />
      {['simulate', 'flow', 'circleCheck', 'dw', 'ring'].map((n) => <IconButton key={n} name={n} />)}
    </div>
    <div className="flex h-8 w-max items-center border-r border-[#999] pl-1 pr-[7px]">
      <Grip />
      <div className="w-[7px]" />
      {offA.map((n) => <IconButton key={n} name={n} />)}
      <div className="ml-1 mr-1 h-5 border-l border-[#777]" />
      {offB.map((n) => <IconButton key={n} name={n} />)}
    </div>
  </div>
);

const BigButton = ({ icon, lines, width, menu }) => (
  <button type="button" className={`flex h-[78px] flex-col items-center shrink-0 ${menu ? 'pt-1' : 'pt-3'} ${width}`}>
    <Icon name={icon} />
    <span className="pt-px text-center leading-[13px]">
      {lines.map((l) => <span key={l} className="block">{l}</span>)}
    </span>
    {menu && <span className="mt-auto pb-[10px]"><Caret /></span>}
  </button>
);

const SmallColumn = ({ items, className }) => (
  <div className={`flex flex-col shrink-0 ${className}`}>
    {items.map(([icon, label]) => (
      <button key={label} type="button" className="flex h-[26px] items-center gap-[6px] whitespace-nowrap">
        <Icon name={icon} />
        {label}
      </button>
    ))}
  </div>
);

const Group = ({ children, className = '' }) => (
  <div className={`flex shrink-0 border-r border-[#ccc] ${className}`}>{children}</div>
);

const Ribbon = () => (
  <div className="flex h-[81px] shrink-0 overflow-hidden pt-px text-[11px]">
    <Group className="w-[268px] pl-[6px]">
      <BigButton icon="extrude" lines={['Extruded', 'Boss/Base']} width="w-[60px]" />
      <BigButton icon="revolve" lines={['Revolved', 'Boss/Base']} width="w-[60px]" />
      <SmallColumn className="pl-[2px]" items={[['sweep', 'Swept Boss/Base'], ['loft', 'Lofted Boss/Base'], ['boundary', 'Boundary Boss/Base']]} />
    </Group>
    <Group className="w-[269px] pl-1">
      <BigButton icon="extrudeCut" lines={['Extruded', 'Cut']} width="w-[51px]" />
      <BigButton icon="hole" lines={['Hole', 'Wizard']} width="w-[51px]" />
      <BigButton icon="revolveCut" lines={['Revolved', 'Cut']} width="w-[51px]" />
      <SmallColumn className="pl-1" items={[['sweepCut', 'Swept Cut'], ['loftCut', 'Lofted Cut'], ['boundaryCut', 'Boundary Cut']]} />
    </Group>
    <Group className="w-[231px]">
      <BigButton icon="fillet" lines={['Fillet']} width="w-[37px]" menu />
      <BigButton icon="pattern" lines={['Linear', 'Pattern']} width="w-[45px]" menu />
      <SmallColumn className="w-[64px] pl-1" items={[['rib', 'Rib'], ['draft', 'Draft'], ['shell', 'Shell']]} />
      <SmallColumn className="pl-1" items={[['wrap', 'Wrap'], ['intersect', 'Intersect'], ['mirror', 'Mirror']]} />
    </Group>
    <Group className="w-[108px] pl-[3px]">
      <BigButton icon="refGeom" lines={['Reference', 'Geometry']} width="w-[57px]" menu />
      <BigButton icon="curves" lines={['Curves']} width="w-[47px]" menu />
    </Group>
    <BigButton icon="instant" lines={['Instant3D']} width="w-[61px]" />
  </div>
);

const tabs = [
  ['Sketch', 'w-[56px]'],
  ['Evaluate', 'w-[60px]'],
  ['DimXpert', 'w-[66px]'],
  ['SOLIDWORKS Add-Ins', 'w-[133px]'],
  ['SOLIDWORKS MBD', 'w-[118px]'],
];

const HeadsUp = () => (
  <div className="flex h-[27px] shrink-0 items-center pl-[66px] mt-px">
    {['zoomFit', 'zoomArea', 'prevView', 'sectionView', 'orient'].map((n) => (
      <button key={n} type="button" aria-label={n} className="flex w-[26px] justify-center"><Icon name={n} /></button>
    ))}
    <CaretButton label="View orientation" className="w-[13px]" tone="text-[#999]" />
    <button type="button" aria-label="Display style" className="flex w-[26px] justify-center"><Icon name="display" /></button>
    <CaretButton label="Display style options" className="w-[14px]" tone="text-[#999]" />
    <div className="flex h-full w-10 border border-[#888] bg-[#b5b5b5]">
      <button type="button" aria-label="Hide or show items" className="flex w-[26px] items-center justify-center"><Icon name="eye" /></button>
      <CaretButton label="Hide or show options" className="flex-1 border-l border-[#999] bg-[#dcdcdc]" />
    </div>
    <button type="button" aria-label="Edit appearance" className="flex w-[26px] justify-center"><Icon name="editLook" /></button>
    <button type="button" aria-label="Apply scene" className="flex w-[26px] justify-center"><Icon name="scene" /></button>
    <CaretButton label="Scene options" className="w-[14px]" tone="text-[#999]" />
    <button type="button" aria-label="View settings" className="flex w-[27px] justify-center"><Icon name="monitor" /></button>
    <CaretButton label="View settings options" tone="text-[#999]" />
  </div>
);

const TabRow = () => (
  <div className="flex h-[23px] shrink-0">
    <button type="button" className="h-full w-[63px] shrink-0 bg-[#f7f7f7] text-[11px] font-bold text-[#333]">Features</button>
    {tabs.map(([label, width]) => (
      <button key={label} type="button" className={`h-[23px] shrink-0 whitespace-nowrap border-l border-y border-[#888] bg-[#d4d4d4] last-of-type:border-r ${width}`}>
        {label}
      </button>
    ))}
    <div className="flex flex-1 border-t border-[#888]">
      <HeadsUp />
      <div className="ml-auto flex h-[30px] shrink-0 items-center gap-[6px]">
        <button type="button" aria-label="Previous pane"><Icon name="paneLeft" /></button>
        <button type="button" aria-label="Next pane"><Icon name="paneRight" /></button>
        <button type="button" aria-label="Minimize" className="ml-1 mt-[10px] h-[3px] w-2 bg-[#999]" />
      </div>
    </div>
  </div>
);

const strip = ['surfExtrude', 'surfRevolve', 'sweep', 'surfLoft', 'surfBoundary', 'surfFill', 'planar', 'offset', 'ruled', 'flatten', 'deleteFace', 'replaceFace', 'zip'];

const SideStrip = () => (
  <div className="flex w-8 shrink-0 flex-col items-center overflow-hidden">
    <div className="mb-2 mt-[3px] w-[26px] shrink-0 border-t-2 border-dotted border-[#bbb]" />
    {strip.map((n) => (
      <button key={n} type="button" aria-label={n} className="flex h-[26px] shrink-0 items-center"><Icon name={n} /></button>
    ))}
    <div className="mb-1 mt-0.5 w-[25px] shrink-0 border-t border-[#888]" />
    <button type="button" aria-label="Extend surface" className="flex h-[26px] shrink-0 items-center"><Icon name="extend" /></button>
    <button type="button" aria-label="Trim surface" className="flex h-[26px] shrink-0 items-center"><Icon name="wave" /></button>
  </div>
);

const tree = [
  ['folderHistory', 'History', true],
  ['folderSensor', 'Sensors', false],
  ['folderNote', 'Annotations', true],
  ['folderSurface', 'Surface Bodies(60)', true],
  ['folderSolid', 'Solid Bodies(45)', true],
  ['material', 'Material <not specified>', false],
  ['plane', 'Front Plane', false],
  ['plane', 'Top Plane', false],
  ['plane', 'Right Plane', false],
  ['origin', 'Origin', false],
  ['sketch', '(-) Sketch1', true],
  ['sketch', 'Sketch3', true],
  ['sketch', '(-) Sketch4', false],
  ['plane', 'Plane1', false],
  ['sketch', '(-) Sketch5', true],
];

const FeaturePanel = () => (
  <aside className="flex w-[266px] shrink-0 flex-col overflow-hidden border-r border-[#888]">
    <div className="mt-px flex h-4 shrink-0 items-center justify-center border-y border-[#ccc]">
      <span className="h-[6px] w-[6px] rounded-full border border-[#999] bg-[#ccc]" />
    </div>
    <div className="mt-1 flex h-[26px] shrink-0">
      <button type="button" aria-label="Feature tree" className="flex w-[39px] items-center justify-center border-t border-[#888]"><Icon name="part" /></button>
      {['sheet', 'config', 'target', 'ball'].map((n) => (
        <button key={n} type="button" aria-label={n} className="flex w-10 items-center justify-center border border-r-0 border-[#888] bg-[#d6d6d6]">
          <Icon name={n} />
        </button>
      ))}
      <div className="border-l border-[#888]" />
      <button type="button" aria-label="More tabs" className="ml-auto mr-[6px]">
        <svg viewBox="0 0 8 12" className="h-3 w-2"><path d="M1 1l5 5-5 5" fill="none" stroke="#555" strokeWidth="1.800" /></svg>
      </button>
    </div>
    <label className="ml-[3px] mr-[3px] flex h-[26px] shrink-0 items-center border border-[#bbb] pl-px">
      <Icon name="funnel" />
      <input type="text" aria-label="Filter tree" className="min-w-0 flex-1 bg-transparent outline-none" />
    </label>
    <div className="flex min-h-0 flex-1 overflow-hidden pt-0.5">
      <ul className="min-w-0 flex-1">
        <li className="flex h-[22px] items-center gap-[3px] whitespace-pre pl-0.5 text-[11px]">
          <Icon name="part" />
          aewf  (Default&lt;&lt;Default&gt;_Display State 1&gt;
        </li>
        {tree.map(([icon, label, more]) => (
          <li key={label} className="flex h-[22px] items-center whitespace-nowrap text-[11px]">
            <span className="flex w-6 shrink-0 pl-2">
              {more && <svg viewBox="0 0 5 8" className="h-2 w-[5px]"><path d="M0 0l5 4-5 4z" fill="#666" /></svg>}
            </span>
            <Icon name={icon} />
            <span className="pl-1">{label}</span>
          </li>
        ))}
      </ul>
      <div className="flex w-[15px] shrink-0 flex-col items-center bg-[#f0f0f0]">
        <svg viewBox="0 0 8 5" className="mt-[6px] h-[5px] w-2"><path d="M0 5l4-4 4 4" fill="none" stroke="#555" strokeWidth="1.500" /></svg>
        <div className="mt-[5px] h-[17px] w-[13px] bg-[#cdcdcd]" />
      </div>
    </div>
  </aside>
);

const Rim = ({ cx, cy, rx = 24, ry = 35 }) => (
  <g>
    <ellipse cx={cx} cy={cy} rx={rx} ry={ry} fill="#9d5140" />
    <ellipse cx={cx} cy={cy} rx={rx - 3} ry={ry - 4} fill="none" stroke="#8a4536" />
    <ellipse cx={cx} cy={cy} rx={rx - 10} ry={ry - 15} fill="#a35643" stroke="#7b3c2f" />
    <ellipse cx={cx} cy={cy} rx={rx - 9} ry={ry - 14} fill="none" stroke="#c58069" strokeWidth="2.500" strokeDasharray="2 6" />
    <ellipse cx={cx} cy={cy} rx={rx - 15} ry={ry - 22} fill="none" stroke="#8a4536" />
    <circle cx={cx} cy={cy} r="1.500" fill="#c58069" />
  </g>
);

const Truck = () => (
  <svg viewBox="298 202 795 412" preserveAspectRatio="xMinYMin meet" className="h-full w-full" role="img" aria-label="Truck model">
    <defs>
      <linearGradient id="cabBack" x1="0" y1="0" x2="0" y2="1">
        <stop offset="0" stopColor="#adadad" />
        <stop offset=".3" stopColor="#929292" />
        <stop offset="1" stopColor="#808080" />
      </linearGradient>
      <linearGradient id="cabEdge">
        <stop offset="0" stopColor="#a8a8a8" />
        <stop offset=".25" stopColor="#b6b6b6" />
        <stop offset=".6" stopColor="#999" />
        <stop offset="1" stopColor="#8b8b8b" />
      </linearGradient>
      <linearGradient id="side" x1="0" y1="0" x2="0" y2="1">
        <stop offset="0" stopColor="#a9a9a9" />
        <stop offset=".5" stopColor="#9f9f9f" />
        <stop offset="1" stopColor="#a7a9aa" />
      </linearGradient>
      <linearGradient id="pipe" x1="0" y1="0" x2="0" y2="1">
        <stop offset="0" stopColor="#bdb5aa" />
        <stop offset=".5" stopColor="#a89e93" />
        <stop offset="1" stopColor="#6f675f" />
      </linearGradient>
    </defs>

    {/* Far wheels */}
    <path d="M680 520c0 28 14 48 30 48h25v-60h-55z" fill="#343434" />
    <Rim cx={707} cy={526} rx={22} ry={31} />
    <path d="M886 520c2 28 12 51 30 51h22c18-4 28-24 30-52z" fill="#373737" />
    <Rim cx={916} cy={526} rx={25} ry={33} />
    <path d="M947 533l20 2c-3 19-12 31-28 36l-15 0c12-6 20-20 23-38z" fill="#858585" />
    <path d="M946 540l19 10M943 548l17 12M939 556l14 11M934 563l11 7" stroke="#333" strokeWidth="1.500" />

    {/* Chassis behind the bed */}
    <path d="M586 468h248v30H640l-20 27h-34z" fill="#a3a5a6" />
    <path d="M690 490h42v30h-42z" fill="#a9b2b7" />
    <path d="M775 474h60v50h-60z" fill="#9aa0a3" />
    <path d="M798 477h6v8h-8z" fill="#fff" />
    <path d="M794 488l8-2v11h-8z" fill="#786d64" />

    {/* Cab */}
    <path d="M530 305l15-2 37-2 8-1 160 1c6 1 9 5 9 11l4 98-170 12-3 106-8-1-29-46-46 36-41-4-6-8 1-36 5-10 8-46 13-60c7-18 22-38 43-48z" fill="#a6a6a6" />
    <path d="M584 303l168 0c6 1 8 5 8 13l-173 0z" fill="#b5b5b5" />
    <path d="M585 312l20 0v100h-20z" fill="url(#cabEdge)" />
    <path d="M601 312l158-1 5 101H597z" fill="#8c8c8c" />
    <path d="M621 315l137-2 6 99H617z" fill="url(#cabBack)" />
    <path d="M619 316c-3 32-3 64-2 94" stroke="#b5b5b5" strokeWidth="3" fill="none" />
    <path d="M601 314v96" stroke="#777" />
    <path d="M591 313h165" stroke="#a0a0a0" strokeWidth="2" />
    <path d="M535 304l47-2M592 301l55-1h50" stroke="#444" fill="none" strokeDasharray="10 8" />

    {/* Side window and door */}
    <path d="M571 317l-24-1c-14 0-30 16-40 30-8 11-11 21-12 40l0 10 7-3c8-11 17-20 28-22h36z" fill="#7979a8" stroke="#333" />
    <path d="M495 385l7 1-5 12-3-3z" fill="#202b69" />
    <path d="M496 345c8-16 20-30 35-36l46-2" fill="none" stroke="#b4b4b4" strokeWidth="2" />
    <path d="M582 303c-4 45-6 100-8 140-1 14-2 19-7 25" fill="none" stroke="#333" />
    <path d="M495 429l80-13" stroke="#777" strokeDasharray="4 1" />
    <path d="M501 399c20 0 42-4 55-9" stroke="#bbb" fill="none" />
    <path d="M551 410h14v7h-14z" fill="#b9b9b9" />
    <path d="M552 406c3-3 8-3 11 0v4h-11z" fill="#111" />
    <path d="M492 358h-8c-4 0-6 4-6 8v16c0 4 2 6 6 6l8 8 5 0V358z" fill="#464646" stroke="#191919" />
    <path d="M481 387h12l3 11h-15z" fill="#222" />
    <path d="M493 360l4 1v28l-6-3z" fill="#646464" />
    <path d="M474 400c-5 20-7 45-9 70" stroke="#b8b8b8" strokeWidth="2" fill="none" />
    <path d="M473 428c-2 15 1 28-3 38l-7 6" stroke="#222" fill="none" />
    <path d="M466 471c2 15 1 31 12 34l29-3" fill="none" stroke="#8a8a8a" />
    <path d="M470 507l36-4v15l-36-6z" fill="#929496" />
    <path d="M492 503h15M504 508v7M500 520h7" stroke="#111" fill="none" strokeWidth="1.500" />

    {/* Front arch and step */}
    <path d="M502 502c0-28 14-48 33-49 25 1 36 20 38 42l15 35-22-14-12-28z" fill="#aaa" />
    <path d="M503 500c-1-28 11-47 32-48 21 2 33 22 37 44" stroke="#b6b6b6" strokeWidth="4" fill="none" />
    <path d="M508 495c2-20 12-33 28-33 16 1 24 13 30 31l-16-12z" fill="#777" />
    <path d="M567 455l25 3 4 70-17-3c-10-8-12-45-22-56z" fill="#a8a8a8" />
    <path d="M594 500h26v25h-26z" fill="#a0a0a0" />
    <path d="M597 500v27" stroke="#b8b8b8" />

    {/* Front wheel */}
    <path d="M538 476c25 2 48 10 50 35 3 38-10 60-32 60h-16c-22-2-33-23-33-49 0-27 13-45 31-46z" fill="#313131" />
    <path d="M568 514l20-5M568 526l20-8M566 538l21-12M562 552l23-18M556 565l23-18" stroke="#1e1e1e" strokeWidth="2" />
    <Rim cx={536} cy={524} />
    <path d="M557 473c6 1 8 5 10 10l6 23c1 4-4 4-5 1-2-10-5-24-11-34z" fill="#ff8c14" />

    {/* Rear window */}
    <rect x="641" y="329" width="79" height="50" rx="13" fill="#666" />
    <rect x="645" y="334" width="71" height="39" rx="9" fill="#8081ad" />
    <path d="M657 335h12l-9 38h-14z" fill="#6b6d7d" />
    <path d="M651 336l6-1-9 35z" fill="#20245b" />
    <path d="M668 335l-11 38h9l12-38z" fill="#aaa" />
    <path d="M668 354c16-4 28 0 26 19h-26z" fill="#494984" />
    <path d="M669 336l-9 36M699 371l18-6" stroke="#333" fill="none" />

    {/* Snorkel and rear pillars */}
    <path d="M721 352v-19c0-10 5-17 14-17h20c10 0 15 7 15 17v74h-18v-74h-17v19z" fill="#555" stroke="#333" />
    <path d="M735 333h18v70h-18z" fill="#8c8c8c" />
    <path d="M725 350v-17c0-8 5-13 12-13h16c8 0 12 5 12 13v72M730 351v-18c0-6 3-9 8-9h13c7 0 10 3 10 10v71" fill="none" stroke="#777" />
    <path d="M736 332h19v45l-4 12 4 16" fill="none" stroke="#151515" strokeWidth="2" />
    <path d="M749 381h26M749 388h26" stroke="#222" strokeWidth="2" />
    <path d="M749 384h25" stroke="#aaa" />
    <path d="M632 393v15M669 392v15M706 392v15M743 392v15" stroke="#adadad" strokeWidth="3" fill="none" />

    {/* Side of the bed */}
    <path d="M590 411l172-6 195 2 58 2-195 4v58l-229 2z" fill="#999" />
    <path d="M760 406l245 3-185 4-90-2z" fill="#8d8d8d" />
    <path d="M590 412h232v62H588z" fill="url(#side)" />
    <path d="M591 413h230" stroke="#ccc" />
    <path d="M591 416h229M591 454h229" stroke="#6a6a6a" />
    <path d="M591 425h230v6H591z" fill="#b0b0b0" />
    <path d="M591 420h18M591 427v27M766 418v8M777 418v9M636 414v5M686 414v5M728 414v5" stroke="#777" />
    <path d="M588 459h230M588 463h230" stroke="#85888a" strokeWidth=".8" />
    <path d="M592 461h8M646 461h6M696 463h7M740 463h7M794 464h6" stroke="#777" strokeWidth="3" />
    <path d="M586 467h232v3H586z" fill="#b5c6ce" />
    <path d="M586 469l234 4" stroke="#f38b26" strokeWidth="3" strokeDasharray="5 2" />
    <path d="M597 478h12v10h-12z" fill="#888" />
    <path d="M608 500l16-12h70v4H622z" fill="#9ea7ab" />

    {/* Tank */}
    <path d="M619 489h62c9 1 11 6 11 12v25h-73z" fill="#706861" />
    <path d="M668 490h18c5 2 6 7 6 12v24h-24z" fill="#5b534d" />
    <path d="M623 488v37M653 489v37" stroke="#967700" strokeWidth="5" />
    <path d="M621 489v36M651 490v36" stroke="#c49f20" />

    {/* Tailgate */}
    <path d="M820 411l195-3 1 96-38 2-30-28h-66l-9 26-53 2z" fill="#8f8f8f" />
    <path d="M825 415l184-5v49l-184 7z" fill="#828282" />
    <path d="M825 415l182-5v4l-182 5z" fill="#a0a0a0" />
    <path d="M825 425l184-6v7l-184 5z" fill="#b0b0b0" />
    <path d="M825 420l183-7" stroke="#555" />
    <path d="M820 411h5v100l-7-2z" fill="#939393" stroke="#707070" strokeWidth=".7" />
    <path d="M1010 408h7v52h-7z" fill="#777" stroke="#696969" />
    <path d="M825 461l184-4v4l-184 4z" fill="#0000ee" />
    <path d="M831 463h8M889 462h10M936 461h9M994 460h10" stroke="#aaa" strokeWidth="3" />
    <path d="M825 466l188-3v42h-35l-28-27-68 1-14 29-43 0z" fill="#858585" />
    <path d="M857 471h12v7h-12zM963 468h12v7h-12z" fill="#fff" stroke="#222" strokeWidth="1.500" />
    <path d="M824 477h19v11h-19zM991 473h17v11h-17z" fill="#c71d0b" />
    <path d="M842 478h6v9h-6zM985 474h6v10h-6z" fill="#d9df7f" />

    {/* Underbody and bumper */}
    <path d="M868 482l16-4 75-1 4 8 13 20-6 3-12-16 1 18H866z" fill="#838687" />
    <path d="M858 494l3 14 100 1 2-11z" fill="#95999b" />
    <path d="M868 483h42l8-2h20" stroke="#bdbdbd" strokeWidth="2" fill="none" />
    <path d="M902 482l8-3 6 2 10-1 2 2 12-2" stroke="#242424" strokeWidth="3" fill="none" />
    <path d="M928 481l4 3 4-3 5 3" stroke="#ddd" fill="none" strokeWidth="1.500" />
    <path d="M962 480l20 25h-8l-14-18z" fill="#777" stroke="#6b6b6b" />
    <path d="M964 492l8 13h-5l-3-4z" fill="#fff" />
    <path d="M855 500l4-6 3 12v12h-10zM963 498l5-4 2 18h-9z" fill="#9ca5a9" />
    <path d="M822 517l194-5c7 0 8 12 0 12l-194 5c-6 0-6-12 0-12z" fill="url(#pipe)" />
    <path d="M853 511h12v5h-12zM853 527h12v5h-12zM959 510h14v3h-14z" fill="#353535" />
    <path d="M866 513c8-1 11 4 10 9 0 6-4 8-10 7 3-5 3-11 0-16zM972 511c8-1 12 2 11 8s-4 8-10 6c2-5 2-9-1-14z" fill="#222" />

    {/* Rear wheel */}
    <path d="M715 487l10-14h50l14 10 1 24h-14l-2-20-14-8-24 0-12 11z" fill="#181818" />
    <path d="M753 478c25 0 43 16 44 44 0 34-11 52-30 52h-19c-20-2-33-22-33-48 0-27 15-47 38-48z" fill="#323232" />
    <path d="M729 483c13-11 33-12 45 2" stroke="#858b8e" fill="none" strokeWidth="2" />
    <path d="M775 519l21-8M775 531l21-12M773 543l22-15M770 556l23-19M763 568l23-19" stroke="#1e1e1e" strokeWidth="2" />
    <Rim cx={743} cy={528} rx={24} ry={36} />

    {/* Triad */}
    <path d="M338 604v-24" stroke="#237a2b" strokeWidth="3" />
    <path d="M338 572l4 10h-8z" fill="#16551d" />
    <path d="M339 603h-16" stroke="#a51420" strokeWidth="3" />
    <path d="M315 603l6-4 6 4-6 5z" fill="#c31522" />
    <text x="334" y="570" fontSize="10" fill="#237a2b" fontFamily="Liberation Sans">Y</text>
    <path d="M311 598l6 8M317 598l-6 8" stroke="#b0203a" />
    <text x="311" y="606" fontSize="10" fill="#3a22a0" fontFamily="Liberation Sans">Z</text>
  </svg>
);

const App = () => (
  <div className="flex h-screen flex-col overflow-hidden bg-[#f7f7f7] font-['Open_Sans',sans-serif] text-[12px] leading-4 text-[#1c1c1c]">
    <TitleBar />
    <Toolbars />
    <Ribbon />
    <main className="flex min-h-0 flex-1 flex-col bg-[radial-gradient(ellipse_44%_60%_at_40%_0%,#fff_40%,transparent),linear-gradient(to_right,transparent_80%,#ffffff90),linear-gradient(to_bottom,#e4e7ef,#dfe2ec_40%,#e3e6ef_54%,#fdfdfe_72%,#fff)]">
      <TabRow />
      <div className="flex min-h-0 flex-1">
        <div className="flex shrink-0 bg-[#f7f7f7]">
          <SideStrip />
          <FeaturePanel />
        </div>
        <section className="relative min-w-0 flex-1">
          <Truck />
          <button type="button" aria-label="Collapse panel" className="absolute left-0 top-[198px] flex h-[39px] w-2 items-center justify-center border border-l-0 border-[#888] bg-white">
            <span className="h-[5px] w-[5px] rounded-full border border-[#999] bg-[#ddd]" />
          </button>
        </section>
      </div>
    </main>
  </div>
);

export default App;
